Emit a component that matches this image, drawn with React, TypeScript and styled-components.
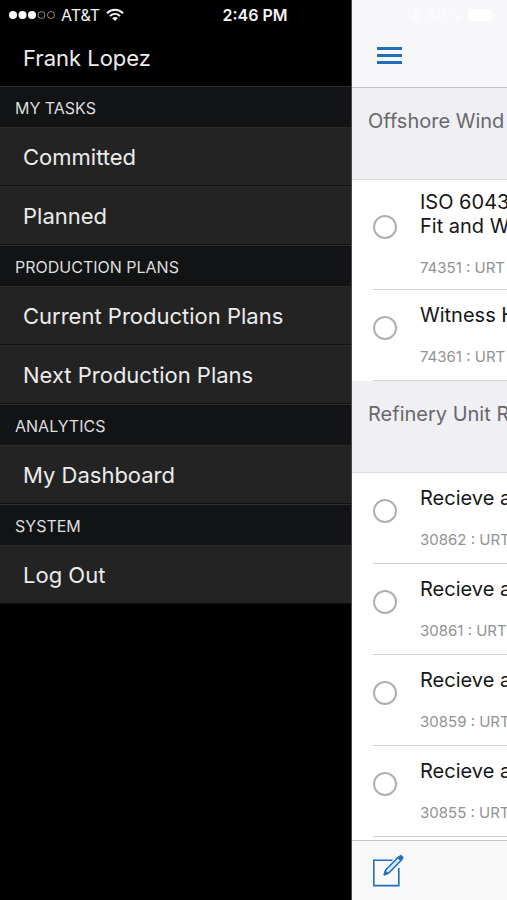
import React from "react";
import styled, { createGlobalStyle } from "styled-components";

const GlobalStyle = createGlobalStyle`
  *, *::before, *::after { box-sizing: border-box; }
  body {
    margin: 0;
    background: #000;
    font-family: Inter, "Liberation Sans", sans-serif;
  }
`;

const Screen = styled.div`
  position: relative;
  display: grid;
  grid-template-columns: minmax(0, 352fr) minmax(0, 155fr);
  min-height: 100vh;
  overflow: hidden;
`;

/* The status bar floats over both the drawer and the page. */
const StatusBar = styled.div`
  position: absolute;
  inset: 0 0 auto 0;
  display: grid;
  grid-template-columns: 1fr auto 1fr;
  align-items: center;
  height: 30px;
  padding: 0 6px 0 9px;
  color: #f4f4f4;
  font-size: 16px;
  line-height: 20px;
  pointer-events: none;
`;

const Carrier = styled.div`
  display: flex;
  align-items: center;
  gap: 6px;
`;

const Clock = styled.time`
  font-weight: 600;
`;

const Power = styled.div`
  display: flex;
  align-items: center;
  justify-content: flex-end;
  gap: 6px;
  padding-right: 6px;
  color: #fcfcfe;
`;

const Drawer = styled.nav`
  display: flex;
  flex-direction: column;
  background: #000;
  border-right: 1px solid #4a4a4a;
`;

const UserName = styled.div`
  height: 86px;
  padding: 44px 23px 0;
  color: #ececec;
  font-size: 22px;
  line-height: 28px;
`;

const GroupTitle = styled.h2`
  margin: 0;
  height: 41px;
  padding: 0 15px;
  border-top: 1px solid #2e2f30;
  background: #111314;
  color: #dedede;
  font-size: 16px;
  font-weight: 400;
  line-height: 42px;
`;

const MenuList = styled.ul`
  margin: 0;
  padding: 0;
  list-style: none;
`;

const MenuLink = styled.a`
  display: block;
  height: 59px;
  padding: 0 23px;
  border-top: 1px solid #2b2b2b;
  border-bottom: 1px solid #101010;
  background: #232323;
  color: #ececec;
  font-size: 22px;
  line-height: 59px;
  text-decoration: none;
  white-space: nowrap;
`;

const Page = styled.main`
  display: flex;
  flex-direction: column;
  overflow: hidden;
  background: #fff;
  white-space: nowrap;
`;

const NavBar = styled.header`
  display: flex;
  align-items: flex-end;
  height: 88px;
  padding: 0 25px 23px;
  border-bottom: 1px solid #c4c4c7;
  background: #f7f7fa;
`;

const IconButton = styled.button`
  display: block;
  padding: 0;
  border: 0;
  background: none;
  color: #1f6fbd;
  line-height: 0;
  cursor: pointer;

  svg { display: block; }
`;

const SectionTitle = styled.h3`
  margin: 0;
  height: 92px;
  padding: 20px 16px 0;
  border-bottom: 1px solid #dededf;
  background: #efeff4;
  color: #68686c;
  font-size: 20px;
  font-weight: 400;
  line-height: 26px;
`;

const TaskList = styled.ul`
  margin: 0;
  padding: 0 0 0 21px;
  list-style: none;
`;

const TaskRow = styled.li<{ $tall?: boolean }>`
  display: flex;
  align-items: center;
  gap: 23px;
  padding: ${(p) => (p.$tall ? "10px 0 11px" : "13px 0")};
  border-bottom: 1px solid #d2d2d3;
`;

const Tick = styled.input`
  appearance: none;
  flex: none;
  width: 24px;
  height: 24px;
  margin: 0 0 14px;
  border: 2px solid #b0b0b0;
  border-radius: 50%;
  background: #fff;

  &:checked { background: #1f6fbd; }
`;

const TaskLabel = styled.label`
  display: block;
  color: #161616;
  font-size: 20px;
  line-height: 24px;
  white-space: pre;
`;

const TaskCode = styled.span`
  display: block;
  margin-top: 20px;
  color: #929292;
  font-size: 15px;
  line-height: 20px;
`;

const Toolbar = styled.footer`
  display: flex;
  align-items: flex-start;
  height: 60px;
  margin-top: auto;
  padding: 13px 20px 0;
  border-top: 1px solid #c6c6c6;
  background: #f8f8f8;
`;

const menu = [
  { title: "MY TASKS", items: ["Committed", "Planned"] },
  { title: "PRODUCTION PLANS", items: ["Current Production Plans", "Next Production Plans"] },
  { title: "ANALYTICS", items: ["My Dashboard"] },
  { title: "SYSTEM", items: ["Log Out"] },
];

const sections = [
  {
    title: "Offshore Wind",
    tasks: [
      { id: "74351", title: "ISO 6043\nFit and We", tall: true },
      { id: "74361", title: "Witness H" },
    ],
  },
  {
    title: "Refinery Unit R",
    tasks: [
      { id: "30862", title: "Recieve a" },
      { id: "30861", title: "Recieve a" },
      { id: "30859", title: "Recieve a" },
      { id: "30855", title: "Recieve a" },
    ],
  },
];

const SignalDots = () => (
  <svg width="46" height="10" viewBox="0 0 46 10" aria-hidden="true">
    {[4, 13.5, 23].map((x) => (
      <circle key={x} cx={x} cy="5" r="4" fill="#fff" />
    ))}
    {[32.5, 42].map((x) => (
      <circle key={x} cx={x} cy="5" r="3.5" fill="none" stroke="#8c8c8c" />
    ))}
  </svg>
);

const WifiIcon = () => (
  <svg width="18" height="14" viewBox="0 0 18 14" fill="none" stroke="#f4f4f4" strokeWidth="2" aria-hidden="true">
    <path d="M1 5.2C5.6.6 12.4.6 17 5.2" />
    <path d="M3.9 8.1c3-2.9 7.2-2.9 10.2 0" />
    <path d="M9 13 6.2 10.2c1.6-1.5 4-1.5 5.6 0Z" fill="#f4f4f4" stroke="none" />
  </svg>
);

const BluetoothIcon = () => (
  <svg width="9" height="14" viewBox="0 0 9 14" fill="none" stroke="currentColor" strokeWidth="1.3" aria-hidden="true">
    <path d="M1 4l7 6-3.5 3V1L8 4l-7 6" />
  </svg>
);

const BatteryIcon = () => (
  <svg width="27" height="12" viewBox="0 0 27 12" fill="#fff" aria-hidden="true">
    <rect width="24" height="12" rx="2" />
    <path d="M25 4c2 .6 2 3.4 0 4Z" />
  </svg>
);

const MenuIcon = () => (
  <svg width="25" height="18" viewBox="0 0 25 18" fill="currentColor" aria-hidden="true">
    <rect y="1" width="25" height="3" />
    <rect y="8" width="25" height="3" />
    <rect y="15" width="25" height="3" />
  </svg>
);

const ComposeIcon = () => (
  <svg width="33" height="33" viewBox="0 0 33 33" fill="none" stroke="currentColor" strokeWidth="1.6" aria-hidden="true">
    <path d="M20.5 6.2H1.8v25.4h25V14" />
    <path d="M12.3 20.8l1.5-5L26.5 3l3 3L17 18.8Z" fill="#d6e9f8" strokeLinejoin="round" />
    <path d="M12 21l1.3-4 2.8 2.6Z" fill="currentColor" strokeWidth="1" />
    <path d="M25.7 3.8l1.9-1.9c1.5-1.5 4.6 1.3 3 3l-1.9 1.9Z" fill="currentColor" strokeWidth="1" />
  </svg>
);

export default function App() {
  return (
    <>
      <GlobalStyle />
      <Screen>
        <Drawer aria-label="Main menu">
          <UserName>Frank Lopez</UserName>
          {menu.map((group) => (
            <section key={group.title}>
              <GroupTitle>{group.title}</GroupTitle>
              <MenuList>
                {group.items.map((item) => (
                  <li key={item}>
                    <MenuLink href="#">{item}</MenuLink>
                  </li>
                ))}
              </MenuList>
            </section>
          ))}
        </Drawer>

        <Page>
          <NavBar>
            <IconButton type="button" aria-label="Toggle menu">
              <MenuIcon />
            </IconButton>
          </NavBar>
          {sections.map((section) => (
            <section key={section.title}>
              <SectionTitle>{section.title}</SectionTitle>
              <TaskList>
                {section.tasks.map((task) => (
                  <TaskRow key={task.id} $tall={task.tall}>
                    <Tick type="checkbox" id={`task-${task.id}`} />
                    <TaskLabel htmlFor={`task-${task.id}`}>
                      {task.title}
                      <TaskCode>{task.id} : URT</TaskCode>
                    </TaskLabel>
                  </TaskRow>
                ))}
              </TaskList>
            </section>
          ))}
          <Toolbar>
            <IconButton type="button" aria-label="Compose">
              <ComposeIcon />
            </IconButton>
          </Toolbar>
        </Page>

        <StatusBar>
          <Carrier>
            <SignalDots />
            <span>AT&amp;T</span>
            <WifiIcon />
          </Carrier>
          <Clock>2:46 PM</Clock>
          <Power>
            <BluetoothIcon />
            <span>80%</span>
            <BatteryIcon />
          </Power>
        </StatusBar>
      </Screen>
    </>
  );
}
